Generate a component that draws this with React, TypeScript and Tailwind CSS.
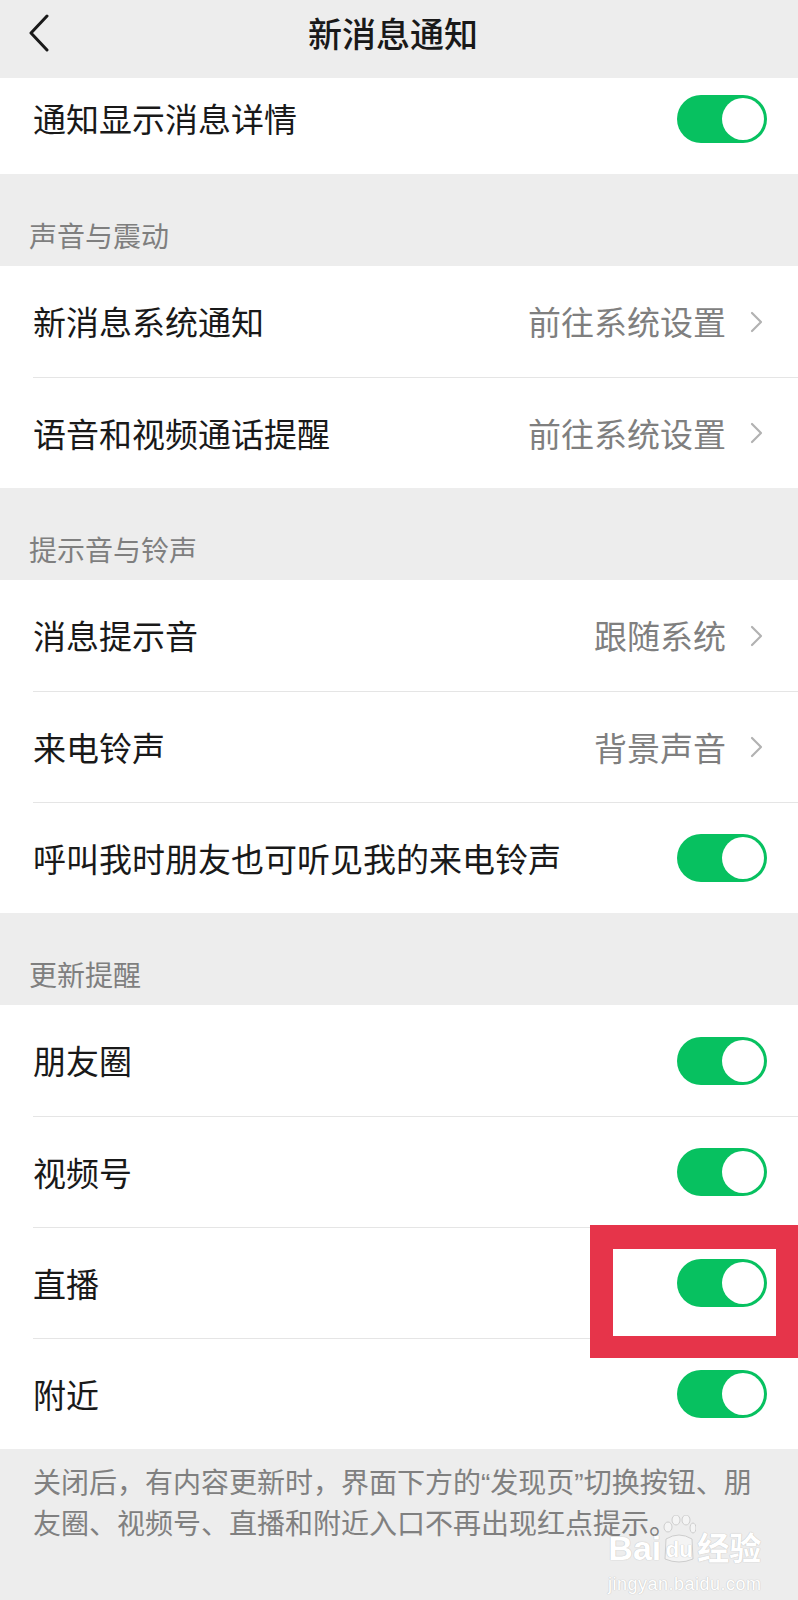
import { Fragment } from "react";

type Row =
  | { label: string; kind: "toggle" }
  | { label: string; kind: "link"; value: string; marked?: boolean };

const sections: { title: string; rows: (Row & { marked?: boolean })[] }[] = [
  {
    title: "声音与震动",
    rows: [
      { label: "新消息系统通知", kind: "link", value: "前往系统设置" },
      { label: "语音和视频通话提醒", kind: "link", value: "前往系统设置" },
    ],
  },
  {
    title: "提示音与铃声",
    rows: [
      { label: "消息提示音", kind: "link", value: "跟随系统" },
      { label: "来电铃声", kind: "link", value: "背景声音" },
      { label: "呼叫我时朋友也可听见我的来电铃声", kind: "toggle" },
    ],
  },
  {
    title: "更新提醒",
    rows: [
      { label: "朋友圈", kind: "toggle" },
      { label: "视频号", kind: "toggle" },
      { label: "直播", kind: "toggle", marked: true },
      { label: "附近", kind: "toggle" },
    ],
  },
];

function Toggle() {
  return (
    <div className="flex h-[48px] w-[90px] justify-end rounded-full bg-[#07c160] p-[3px]">
      <div className="h-[42px] w-[42px] rounded-full bg-white" />
    </div>
  );
}

function Chevron() {
  return (
    <svg width="16" height="24" viewBox="0 0 16 24" className="ml-[22px]">
      <path d="M4 3 L13 12 L4 21" fill="none" stroke="#b2b2b2" strokeWidth="2.2" strokeLinecap="round" strokeLinejoin="round" />
    </svg>
  );
}

function SettingRow({ row, first }: { row: Row & { marked?: boolean }; first: boolean }) {
  return (
    <div className="relative h-[111px] bg-white pl-[33px]">
      <div
        className={`flex h-full items-center justify-between ${first ? "" : "border-t border-[#e5e5e5]"} ${
          row.kind === "toggle" ? "pr-[31px]" : "pr-[34px]"
        }`}
      >
        <span className="pt-[5px] text-[33px] text-[#191919]">{row.label}</span>
        {row.kind === "toggle" ? (
          <Toggle />
        ) : (
          <div className="flex items-center">
            <span className="pt-[5px] text-[33px] text-[#7f7f7f]">{row.value}</span>
            <Chevron />
          </div>
        )}
      </div>
      {/* red highlight box */}
      {row.marked && (
        <div className="absolute right-0 left-[590px] top-[-2px] z-10 h-[133px] border-t-[24px] border-r-[22px] border-b-[22px] border-l-[23px] border-[#e6344a]" />
      )}
    </div>
  );
}

function Watermark() {
  return (
    <div className="absolute top-[66px] left-[608px] flex flex-col items-center text-white [text-shadow:0_0_1px_#c4c4c4,0_0_1px_#c4c4c4]">
      <div className="flex items-end leading-none">
        <span className="text-[34px] font-bold font-['Liberation_Sans',sans-serif]">Bai</span>
        <div className="relative mx-[1px] flex h-[50px] w-[34px] items-end justify-center">
          <svg width="34" height="50" viewBox="0 0 34 50" className="absolute inset-0">
            <g fill="#f4f4f4" stroke="#cdcdcd" strokeWidth="1">
              <ellipse cx="6" cy="12" rx="4" ry="5" />
              <ellipse cx="14" cy="5" rx="4" ry="5" />
              <ellipse cx="24" cy="5" rx="4" ry="5" />
              <ellipse cx="31" cy="13" rx="3" ry="5" />
              <path d="M4 24 Q17 16 30 24 L31 44 Q17 50 3 44 Z" />
            </g>
          </svg>
          <span className="relative pb-[4px] text-[22px] font-bold font-['Liberation_Sans',sans-serif]">du</span>
        </div>
        <span className="text-[32px] font-bold">经验</span>
      </div>
      <span className="mt-[6px] text-[18px] font-['Liberation_Sans',sans-serif] tracking-[0.5px]">jingyan.baidu.com</span>
    </div>
  );
}

export default function App() {
  return (
    <div className="flex min-h-[1600px] w-[798px] flex-col bg-[#ededed] font-['Liberation_Sans','Noto_Sans_CJK_SC',sans-serif]">
      {/* Header */}
      <div className="h-[78px] bg-[#ededed]">
        <div className="grid h-[66px] grid-cols-[74px_1fr_86px] items-center">
          <div className="pl-[28px]">
            <svg width="22" height="38" viewBox="0 0 22 38">
              <path d="M19 2 L3 19 L19 36" fill="none" stroke="#191919" strokeWidth="3" strokeLinecap="round" strokeLinejoin="round" />
            </svg>
          </div>
          <div className="pt-[4px] text-center text-[34px] font-medium text-[#191919]">新消息通知</div>
          <div />
        </div>
      </div>

      {/* First row, partly under the header */}
      <div className="flex h-[96px] items-center justify-between bg-white pr-[31px] pb-[15px] pl-[33px]">
        <span className="pt-[5px] text-[33px] text-[#191919]">通知显示消息详情</span>
        <Toggle />
      </div>

      {sections.map((section) => (
        <Fragment key={section.title}>
          <div className="flex h-[92px] items-end px-[29px] pb-[8px]">
            <span className="text-[28px] leading-[40px] text-[#7f7f7f]">{section.title}</span>
          </div>
          <div>
            {section.rows.map((row, i) => (
              <SettingRow key={row.label} row={row} first={i === 0} />
            ))}
          </div>
        </Fragment>
      ))}

      {/* Footer note */}
      <div className="relative flex-1 bg-[#ededed] px-[33px] pt-[14px]">
        <p className="text-[28px] leading-[41px] text-[#808080] whitespace-nowrap">
          关闭后，有内容更新时，界面下方的“发现页”切换按钮、朋
          <br />
          友圈、视频号、直播和附近入口不再出现红点提示。
        </p>
        <Watermark />
      </div>
    </div>
  );
}
